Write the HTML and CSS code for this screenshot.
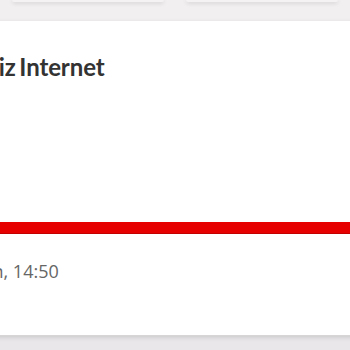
FILE: index.html
```html
<!DOCTYPE html>
<html>
<head>
<meta charset="utf-8">
<link rel="stylesheet" href="styles.css">
</head>
<body>
<div class="page">
  <div class="top-row">
    <div class="mini-card"></div>
    <div class="mini-card"></div>
  </div>
  <div class="card">
    <h2 class="title">Limitsiz Internet</h2>
    <div class="bar"></div>
    <div class="date">Bugün, 14:50</div>
  </div>
</div>
</body>
</html>
```

FILE: styles.css
```css
html, body {
  margin: 0;
  padding: 0;
}
body {
  width: 350px;
  height: 350px;
  overflow: hidden;
  background: #e9e7e9;
}
.page {
  background: #f2eff1;
  height: 336px;
}
.top-row {
  display: flex;
  gap: 22px;
  padding: 0 12px 0 12px;
  height: 2px;
}
.mini-card {
  flex: 1;
  height: 2px;
  background: #f4f2f3;
  box-shadow: 0 1px 4px rgba(0, 0, 0, 0.18);
  border-radius: 0 0 3px 3px;
}
.card {
  margin-top: 19px;
  margin-left: -80px;
  width: 440px;
  height: 314px;
  background: #ffffff;
  box-shadow: 0 2px 5px rgba(0, 0, 0, 0.15);
  display: flex;
  flex-direction: column;
}
.title {
  margin: 31px 0 0 0;
  padding-left: 15px;
  font-family: Lato, "Noto Sans", sans-serif;
  font-weight: 700;
  font-size: 24px;
  line-height: 30px;
  letter-spacing: -0.1px;
  word-spacing: -2px;
  color: #333333;
}
.bar {
  margin-top: 140px;
  height: 12px;
  background: #e60000;
  box-shadow: inset 0 -1px 0 rgba(0, 0, 0, 0.15);
}
.date {
  margin-top: 25px;
  padding-left: 29px;
  font-family: "Open Sans", sans-serif;
  font-size: 18px;
  line-height: 24px;
  color: #666666;
}
```
